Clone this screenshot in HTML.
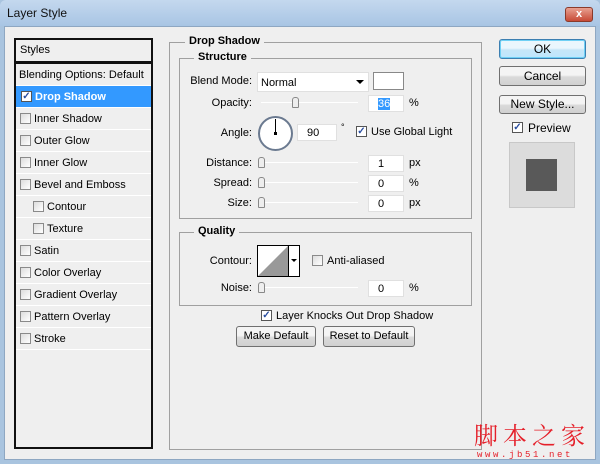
<!DOCTYPE html>
<html><head><meta charset="utf-8"><style>
*{margin:0;padding:0;box-sizing:border-box}
body{width:600px;height:464px;position:relative;overflow:hidden;background:#a9c4df;font-family:"Liberation Sans",sans-serif;font-size:11px;color:#000}
.a{position:absolute}
.title{left:0;top:0;width:600px;height:26px;background:linear-gradient(#c4d8ee,#a8c5e4);border-radius:6px 6px 0 0}
.body{left:4px;top:26px;width:592px;height:434px;background:#efefef;border:1px solid #8ea7c2}
.t{white-space:nowrap}
.lbl{text-align:right;width:80px}
.cb{width:11px;height:11px;border:1px solid #8a8a8a;background:linear-gradient(135deg,#ddd,#fff)}
.cbk{width:11px;height:11px;border:1px solid #555;background:#fff;color:#2a4ea0;font-size:11px;line-height:9px;text-align:center;font-weight:bold}
.inp{background:#fff;border:1px solid #e0e0e0;height:17px;padding-left:9px;line-height:17px}
.fs{border:1px solid #a0a0a0}
.leg{background:#efefef;font-weight:bold;padding:0 4px}
.btn{border:1px solid #707070;border-radius:3px;background:linear-gradient(#f4f4f4 45%,#dadada 55%,#d0d0d0);text-align:center;font-size:12px}
.track{height:1px;background:#aaa;border-bottom:1px solid #fff}
.thumb{width:7px;height:11px;border:1px solid #888;border-radius:3px 3px 1px 1px;background:#eee}
.item{left:16px;width:135px;height:22px;line-height:22px;border-bottom:1px solid #fff}
</style></head><body>
<div class="a title"></div>
<div class="a t" style="left:7px;top:6px;font-size:12px;color:#111">Layer Style</div>
<div class="a" style="left:565px;top:7px;width:28px;height:15px;border-radius:3px;background:linear-gradient(#e8a090,#c74a36);border:1px solid #8a3a2a;color:#fff;font-weight:bold;text-align:center;line-height:13px;font-size:11px">x</div>
<div class="a body"></div>

<div class="a" style="left:14px;top:38px;width:139px;height:25px;border:2px solid #111;background:#efefef"></div>
<div class="a t" style="left:20px;top:44px">Styles</div>
<div class="a" style="left:14px;top:63px;width:139px;height:386px;border:2px solid #111;border-top-width:1px;background:#efefef"></div>
<div class="a item t" style="top:64px;padding-left:3px">Blending Options: Default</div>
<div class="a item" style="top:86px;background:#3399ff;color:#fff;font-weight:bold;padding-left:4px"><span style="padding-left:15px">Drop Shadow</span></div>
<div class="a" style="left:21px;top:91px;width:11px;height:11px;background:#fff;border:1px solid #555;color:#2a4ea0;font-size:10px;line-height:9px;text-align:center;font-weight:bold">✓</div>

<div class="a item" style="top:108px"><span class="a cb" style="left:4px;top:5px"></span><span style="padding-left:18px">Inner Shadow</span></div>
<div class="a item" style="top:130px"><span class="a cb" style="left:4px;top:5px"></span><span style="padding-left:18px">Outer Glow</span></div>
<div class="a item" style="top:152px"><span class="a cb" style="left:4px;top:5px"></span><span style="padding-left:18px">Inner Glow</span></div>
<div class="a item" style="top:174px"><span class="a cb" style="left:4px;top:5px"></span><span style="padding-left:18px">Bevel and Emboss</span></div>
<div class="a item" style="top:196px"><span class="a cb" style="left:17px;top:5px"></span><span style="padding-left:31px">Contour</span></div>
<div class="a item" style="top:218px"><span class="a cb" style="left:17px;top:5px"></span><span style="padding-left:31px">Texture</span></div>
<div class="a item" style="top:240px"><span class="a cb" style="left:4px;top:5px"></span><span style="padding-left:18px">Satin</span></div>
<div class="a item" style="top:262px"><span class="a cb" style="left:4px;top:5px"></span><span style="padding-left:18px">Color Overlay</span></div>
<div class="a item" style="top:284px"><span class="a cb" style="left:4px;top:5px"></span><span style="padding-left:18px">Gradient Overlay</span></div>
<div class="a item" style="top:306px"><span class="a cb" style="left:4px;top:5px"></span><span style="padding-left:18px">Pattern Overlay</span></div>
<div class="a item" style="top:328px"><span class="a cb" style="left:4px;top:5px"></span><span style="padding-left:18px">Stroke</span></div>

<div class="a fs" style="left:169px;top:42px;width:313px;height:408px"></div>
<div class="a leg t" style="left:185px;top:35px">Drop Shadow</div>
<div class="a fs" style="left:179px;top:58px;width:293px;height:161px"></div>
<div class="a leg t" style="left:194px;top:51px">Structure</div>

<div class="a t lbl" style="left:172px;top:75px">Blend Mode:</div>
<div class="a inp" style="left:257px;top:72px;width:112px;height:20px;line-height:20px;padding-left:3px">Normal</div>
<div class="a" style="left:356px;top:80px;border:4px solid transparent;border-top:4px solid #000"></div>
<div class="a" style="left:373px;top:72px;width:31px;height:18px;background:#fff;border:1px solid #888"></div>

<div class="a t lbl" style="left:172px;top:97px">Opacity:</div>
<div class="a track" style="left:261px;top:102px;width:97px"></div>
<div class="a thumb" style="left:292px;top:97px"></div>
<div class="a inp" style="left:368px;top:95px;width:36px"><span style="background:#3399ff;color:#fff">36</span></div>
<div class="a t" style="left:409px;top:97px">%</div>

<div class="a t lbl" style="left:172px;top:127px">Angle:</div>
<div class="a" style="left:258px;top:116px;width:35px;height:35px;border-radius:50%;border:2px solid #6b7a90;background:#fff"></div>
<div class="a" style="left:275px;top:119px;width:1px;height:15px;background:#000"></div>
<div class="a" style="left:274px;top:132px;width:3px;height:3px;background:#000"></div>
<div class="a inp" style="left:297px;top:124px;width:40px">90</div>
<div class="a t" style="left:341px;top:122px;font-size:9px">°</div>
<div class="a cbk" style="left:356px;top:126px;font-size:10px">✓</div>
<div class="a t" style="left:371px;top:126px">Use Global Light</div>

<div class="a t lbl" style="left:172px;top:157px">Distance:</div>
<div class="a track" style="left:261px;top:162px;width:97px"></div>
<div class="a thumb" style="left:258px;top:157px"></div>
<div class="a inp" style="left:368px;top:155px;width:36px">1</div>
<div class="a t" style="left:409px;top:157px">px</div>

<div class="a t lbl" style="left:172px;top:177px">Spread:</div>
<div class="a track" style="left:261px;top:182px;width:97px"></div>
<div class="a thumb" style="left:258px;top:177px"></div>
<div class="a inp" style="left:368px;top:175px;width:36px">0</div>
<div class="a t" style="left:409px;top:177px">%</div>

<div class="a t lbl" style="left:172px;top:197px">Size:</div>
<div class="a track" style="left:261px;top:202px;width:97px"></div>
<div class="a thumb" style="left:258px;top:197px"></div>
<div class="a inp" style="left:368px;top:195px;width:36px">0</div>
<div class="a t" style="left:409px;top:197px">px</div>

<div class="a fs" style="left:179px;top:232px;width:293px;height:74px"></div>
<div class="a leg t" style="left:194px;top:225px">Quality</div>
<div class="a t lbl" style="left:172px;top:255px">Contour:</div>
<div class="a" style="left:257px;top:245px;width:43px;height:32px;border:1px solid #000;background:#fff"></div>
<svg class="a" style="left:258px;top:246px" width="30" height="30"><polygon points="0,30 30,0 30,30" fill="#999"/></svg>
<div class="a" style="left:288px;top:246px;width:1px;height:30px;background:#000"></div>
<div class="a" style="left:291px;top:259px;border:3px solid transparent;border-top:3px solid #000"></div>
<div class="a cb" style="left:312px;top:255px"></div>
<div class="a t" style="left:327px;top:255px">Anti-aliased</div>

<div class="a t lbl" style="left:172px;top:282px">Noise:</div>
<div class="a track" style="left:261px;top:287px;width:97px"></div>
<div class="a thumb" style="left:258px;top:282px"></div>
<div class="a inp" style="left:368px;top:280px;width:36px">0</div>
<div class="a t" style="left:409px;top:282px">%</div>

<div class="a cbk" style="left:261px;top:310px;font-size:10px">✓</div>
<div class="a t" style="left:276px;top:310px">Layer Knocks Out Drop Shadow</div>
<div class="a btn" style="left:236px;top:326px;width:80px;height:21px;line-height:19px;font-size:11px">Make Default</div>
<div class="a btn" style="left:323px;top:326px;width:92px;height:21px;line-height:19px;font-size:11px">Reset to Default</div>

<div class="a btn" style="left:499px;top:39px;width:87px;height:20px;line-height:18px;border-color:#3c7fb1;box-shadow:0 0 0 1px #6fd0f5 inset;background:linear-gradient(#eaf6fd 45%,#c6e6f8 55%,#bee6fd)">OK</div>
<div class="a btn" style="left:499px;top:66px;width:87px;height:20px;line-height:18px">Cancel</div>
<div class="a btn" style="left:499px;top:95px;width:87px;height:19px;line-height:17px">New Style...</div>
<div class="a cbk" style="left:512px;top:122px;font-size:10px">✓</div>
<div class="a t" style="left:528px;top:121px;font-size:12px">Preview</div>
<div class="a" style="left:509px;top:142px;width:66px;height:66px;background:#dcdcdc;border:1px solid #c8c8c8"></div>
<div class="a" style="left:526px;top:159px;width:31px;height:32px;background:#595959"></div>

<div class="a t" style="left:474px;top:421px;font-family:'Noto Serif CJK SC',serif;font-size:24px;color:#e5202a;letter-spacing:5px;line-height:26px">脚本之家</div>
<div class="a t" style="left:477px;top:450px;font-family:'Liberation Mono',monospace;font-size:9px;color:#e5202a;letter-spacing:2.6px;line-height:10px">www.jb51.net</div>
</body></html>
